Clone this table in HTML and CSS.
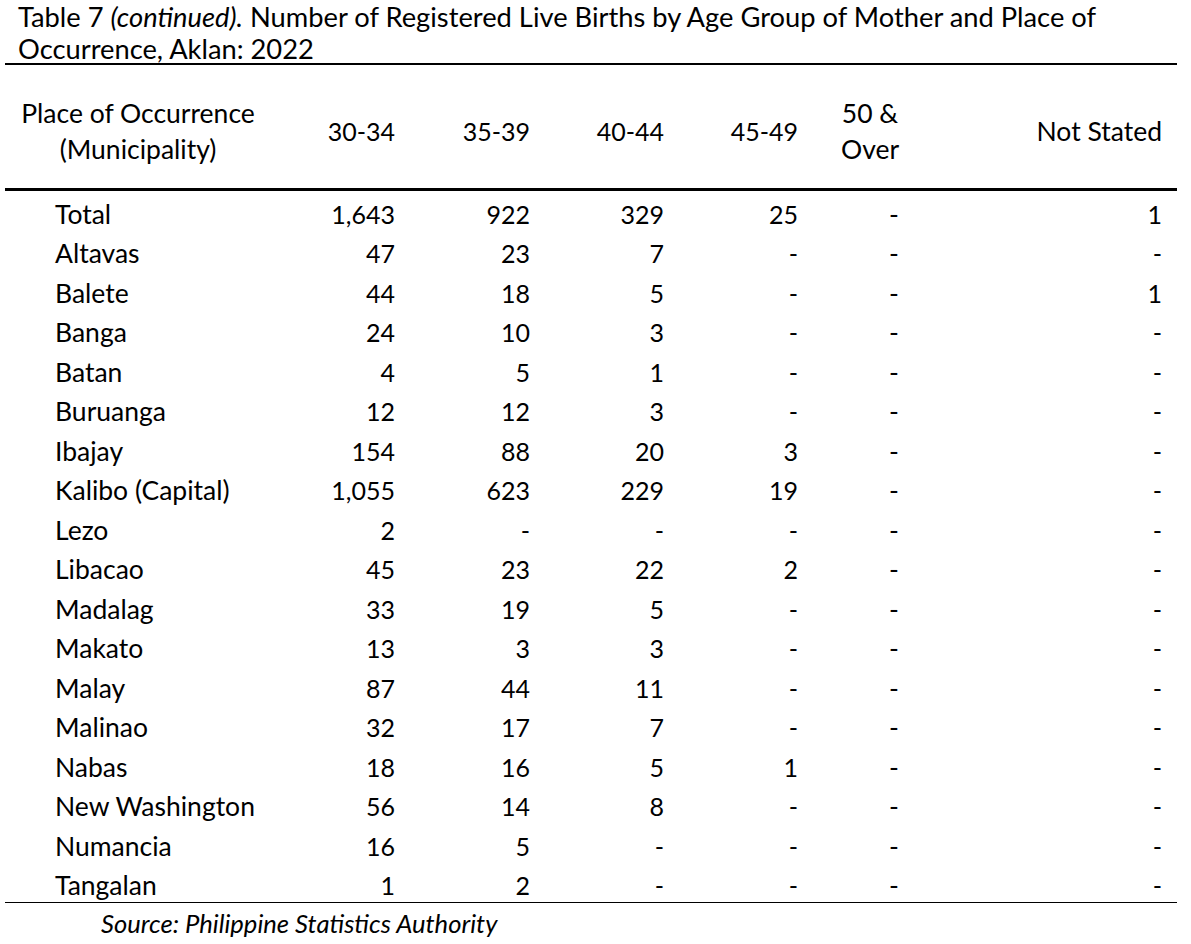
FILE: index.html
```html
<!DOCTYPE html>
<html lang="en">
<head>
<meta charset="utf-8">
<title>Table 7 (continued)</title>
<link rel="stylesheet" href="styles.css">
</head>
<body>
<div class="page">
  <p class="title">Table 7 <i>(continued).</i> Number of Registered Live Births by Age Group of Mother and Place of<br>Occurrence, Aklan: 2022</p>
  <table class="data">
    <colgroup>
      <col class="c-name"><col class="c-a"><col class="c-b"><col class="c-c"><col class="c-d"><col class="c-e"><col class="c-f">
    </colgroup>
    <thead>
      <tr>
        <th class="h-name">Place of Occurrence<br>(Municipality)</th>
        <th class="num fig n1">30-34</th>
        <th class="num fig n2">35-39</th>
        <th class="num fig n3">40-44</th>
        <th class="num fig n4">45-49</th>
        <th class="over"><span class="stack">50 &amp;<br>Over</span></th>
        <th class="num n6">Not Stated</th>
      </tr>
    </thead>
    <tbody>
      <tr><td class="name">Total</td><td class="num fig n1">1,643</td><td class="num fig n2">922</td><td class="num fig n3">329</td><td class="num fig n4">25</td><td class="dash">-</td><td class="num fig n6">1</td></tr>
      <tr><td class="name">Altavas</td><td class="num fig n1">47</td><td class="num fig n2">23</td><td class="num fig n3">7</td><td class="num fig n4">-</td><td class="dash">-</td><td class="num fig n6">-</td></tr>
      <tr><td class="name">Balete</td><td class="num fig n1">44</td><td class="num fig n2">18</td><td class="num fig n3">5</td><td class="num fig n4">-</td><td class="dash">-</td><td class="num fig n6">1</td></tr>
      <tr><td class="name">Banga</td><td class="num fig n1">24</td><td class="num fig n2">10</td><td class="num fig n3">3</td><td class="num fig n4">-</td><td class="dash">-</td><td class="num fig n6">-</td></tr>
      <tr><td class="name">Batan</td><td class="num fig n1">4</td><td class="num fig n2">5</td><td class="num fig n3">1</td><td class="num fig n4">-</td><td class="dash">-</td><td class="num fig n6">-</td></tr>
      <tr><td class="name">Buruanga</td><td class="num fig n1">12</td><td class="num fig n2">12</td><td class="num fig n3">3</td><td class="num fig n4">-</td><td class="dash">-</td><td class="num fig n6">-</td></tr>
      <tr><td class="name">Ibajay</td><td class="num fig n1">154</td><td class="num fig n2">88</td><td class="num fig n3">20</td><td class="num fig n4">3</td><td class="dash">-</td><td class="num fig n6">-</td></tr>
      <tr><td class="name">Kalibo (Capital)</td><td class="num fig n1">1,055</td><td class="num fig n2">623</td><td class="num fig n3">229</td><td class="num fig n4">19</td><td class="dash">-</td><td class="num fig n6">-</td></tr>
      <tr><td class="name">Lezo</td><td class="num fig n1">2</td><td class="num fig n2">-</td><td class="num fig n3">-</td><td class="num fig n4">-</td><td class="dash">-</td><td class="num fig n6">-</td></tr>
      <tr><td class="name">Libacao</td><td class="num fig n1">45</td><td class="num fig n2">23</td><td class="num fig n3">22</td><td class="num fig n4">2</td><td class="dash">-</td><td class="num fig n6">-</td></tr>
      <tr><td class="name">Madalag</td><td class="num fig n1">33</td><td class="num fig n2">19</td><td class="num fig n3">5</td><td class="num fig n4">-</td><td class="dash">-</td><td class="num fig n6">-</td></tr>
      <tr><td class="name">Makato</td><td class="num fig n1">13</td><td class="num fig n2">3</td><td class="num fig n3">3</td><td class="num fig n4">-</td><td class="dash">-</td><td class="num fig n6">-</td></tr>
      <tr><td class="name">Malay</td><td class="num fig n1">87</td><td class="num fig n2">44</td><td class="num fig n3">11</td><td class="num fig n4">-</td><td class="dash">-</td><td class="num fig n6">-</td></tr>
      <tr><td class="name">Malinao</td><td class="num fig n1">32</td><td class="num fig n2">17</td><td class="num fig n3">7</td><td class="num fig n4">-</td><td class="dash">-</td><td class="num fig n6">-</td></tr>
      <tr><td class="name">Nabas</td><td class="num fig n1">18</td><td class="num fig n2">16</td><td class="num fig n3">5</td><td class="num fig n4">1</td><td class="dash">-</td><td class="num fig n6">-</td></tr>
      <tr><td class="name">New Washington</td><td class="num fig n1">56</td><td class="num fig n2">14</td><td class="num fig n3">8</td><td class="num fig n4">-</td><td class="dash">-</td><td class="num fig n6">-</td></tr>
      <tr><td class="name">Numancia</td><td class="num fig n1">16</td><td class="num fig n2">5</td><td class="num fig n3">-</td><td class="num fig n4">-</td><td class="dash">-</td><td class="num fig n6">-</td></tr>
      <tr><td class="name">Tangalan</td><td class="num fig n1">1</td><td class="num fig n2">2</td><td class="num fig n3">-</td><td class="num fig n4">-</td><td class="dash">-</td><td class="num fig n6">-</td></tr>
    </tbody>
  </table>
  <p class="source">Source: Philippine Statistics Authority</p>
</div>
</body>
</html>
```
FILE: styles.css
```css
html, body {
  margin: 0;
  padding: 0;
  background: #ffffff;
}
body {
  font-family: "Lato", "Open Sans", sans-serif;
  font-size: 26.5px;
  color: #000000;
}
.page {
  width: 1191px;
}
.title {
  margin: 0;
  padding: 1px 0 0 18px;
  height: 62px;
  font-size: 27.3px;
  line-height: 32px;
  white-space: nowrap;
}
.data {
  margin-left: 5px;
  width: 1172px;
  table-layout: fixed;
  border-collapse: collapse;
  border-top: 2px solid #000;
  border-bottom: 1px solid #000;
}
.c-name { width: 290px; }
.c-a { width: 134px; }
.c-b { width: 135px; }
.c-c { width: 133px; }
.c-d { width: 122px; }
.c-e { width: 147px; }
.c-f { width: 211px; }

.data th {
  font-weight: normal;
  height: 125px;
  padding: 9px 0 0 0;
  box-sizing: border-box;
  line-height: 36px;
  vertical-align: middle;
  border-bottom: 3px solid #000;
}
.data td {
  padding: 8px 0 0 0;
  line-height: 31.5px;
  vertical-align: top;
  white-space: nowrap;
}
.h-name {
  text-align: center;
  padding-right: 24px !important;
}
.name {
  padding-left: 50px !important;
  text-align: left;
}
.num { text-align: right; }
.fig { font-size: 25px; }
.n1 { padding-right: 34px !important; }
.n2 { padding-right: 34px !important; }
.n3 { padding-right: 33px !important; }
.n4 { padding-right: 21px !important; }
.n6 { padding-right: 15px !important; }
.over {
  text-align: left;
  padding-left: 22px !important;
}
.stack {
  display: inline-block;
  text-align: center;
  line-height: 36px;
}
.dash {
  text-align: left;
  padding-left: 70px !important;
}
.source {
  margin: 0;
  padding: 5px 0 0 101px;
  font-size: 25.6px;
  line-height: 30px;
  font-style: italic;
}
```
